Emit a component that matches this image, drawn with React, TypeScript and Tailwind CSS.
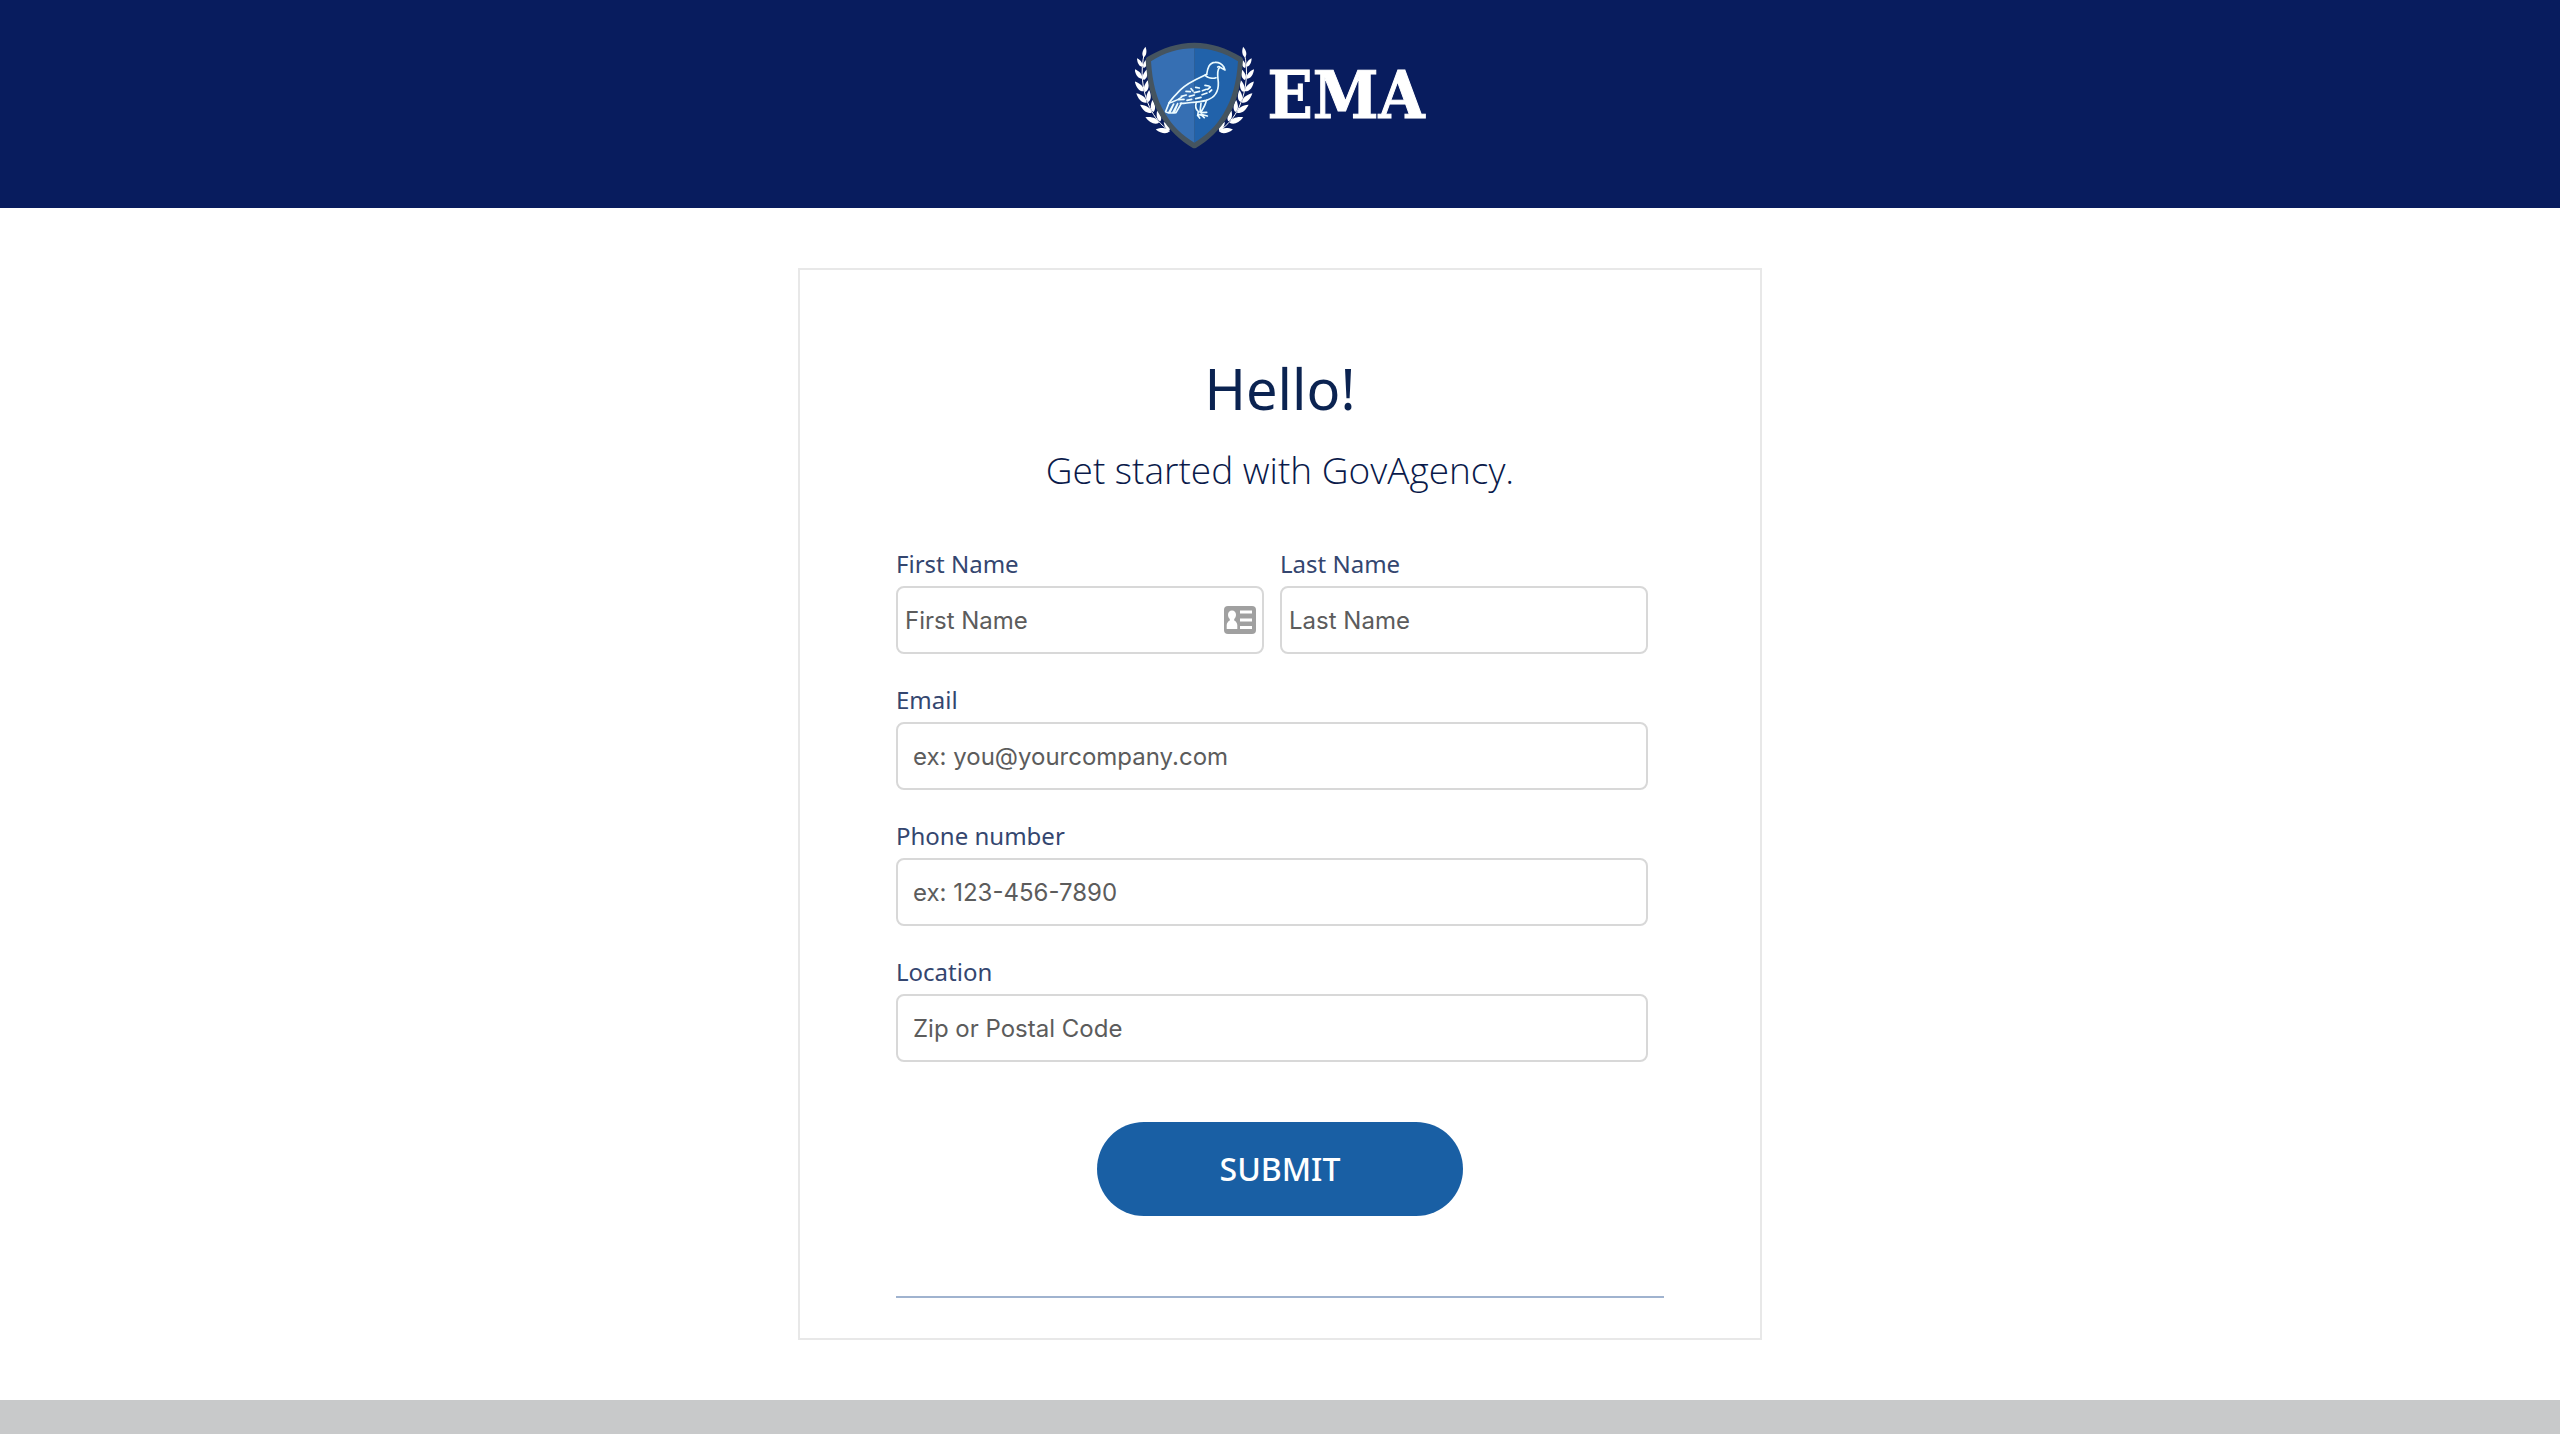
import { useState } from "react";

// [baseX, baseY, rotation, length] of each leaf on the left branch
const leaves = [
  [74, 82, 10, 32],
  [70, 110, -32, 30],
  [74, 114, 22, 30],
  [69, 146, -38, 36],
  [74, 150, 18, 34],
  [74, 184, -42, 40],
  [79, 186, 12, 36],
  [83, 218, -48, 42],
  [88, 216, 4, 36],
  [98, 248, -56, 42],
  [103, 246, -4, 36],
  [120, 278, -68, 44],
  [124, 274, -16, 34],
  [152, 304, -82, 42],
  [152, 300, -36, 30],
];

const Branch = () => (
  <g fill="#ffffff">
    <path d="M76 70C64 120 68 180 92 232C106 262 126 286 152 303" fill="none" stroke="#ffffff" strokeWidth="3" />
    {leaves.map(([x, y, angle, length]) => (
      <path
        key={`${x}-${y}`}
        transform={`translate(${x} ${y}) rotate(${angle}) scale(${length / 30})`}
        d="M0 0C-8 -6 -7 -18 0 -30C7 -18 7 -6 0 0Z"
      />
    ))}
  </g>
);

const Crest = () => (
  <svg viewBox="48 36 360 324" className="h-[108px] w-[120px]" fill="none" aria-hidden="true">
    <Branch />
    <g transform="translate(452 0) scale(-1 1)">
      <Branch />
    </g>
    <path
      d="M226 38C176 38 130 54 86 80Q80 83 80 90C84 156 98 218 124 258C150 300 186 334 220 353Q226 357 232 353C266 334 302 300 328 258C354 218 368 156 372 90Q372 83 366 80C322 54 276 38 226 38Z"
      fill="#45545f"
    />
    <path d="M226 55C180 55 136 68 96 94C100 156 112 208 138 250C160 288 190 317 226 338Z" fill="#366fb3" />
    <path d="M226 55C272 55 316 68 357 94C353 156 340 208 314 250C292 288 262 317 226 338Z" fill="#2162aa" />

    <g stroke="#ecfbff" strokeWidth="5" strokeLinecap="round" strokeLinejoin="round">
      <path d="M263 133C266 115 270 98 288 97C300 96 308 101 314 110L318 120L303 112C301 109 298 109 296 111" />
      <path d="M301 113C292 124 297 140 298 158C299 184 288 203 262 211C240 217 216 217 194 220L184 220" />
      <path d="M263 133C235 146 205 158 185 179C172 193 158 205 150 219" />
      <path d="M258 136C266 143 280 147 291 143" />
      <path d="M150 219L140 245L149 249L164 222M164 222L152 249L161 249L176 221M176 221L165 249L171 248L187 220" />
      <path d="M151 219C164 214 176 212 188 201" />
      <path d="M187 199L202 195M201 184L214 185M178 209L195 208M204 211L218 208M211 199L226 195M230 206L246 202M216 176L222 183M230 172L241 174M226 188L242 184M250 182L262 178M249 194L264 189M258 166L270 168M266 178L274 171M271 186L278 180" />
      <path d="M232 217C228 229 231 239 238 245L236 256M262 211C260 223 253 235 246 246M246 220L243 246" />
      <path d="M236 256C240 253 247 252 256 263M246 248L263 247M246 253L265 258M236 256L242 264" />
    </g>
  </svg>
);

type FieldProps = {
  id: string;
  label: string;
  placeholder: string;
  type?: string;
  compact?: boolean;
  withCard?: boolean;
};

function Field({ id, label, placeholder, type = "text", compact, withCard }: FieldProps) {
  const [value, setValue] = useState("");

  return (
    <div className="pr-4">
      <label htmlFor={id} className="block pb-1 font-['Noto_Sans',sans-serif] text-2xl/[36px] text-[#34466f]">
        {label}
      </label>
      <div className="relative">
        <input
          id={id}
          type={type}
          value={value}
          placeholder={placeholder}
          onChange={(e) => setValue(e.target.value)}
          className={`block h-[68px] w-full rounded-lg border-2 border-[#d8d8d8] bg-white font-[Inter,sans-serif] text-2xl text-[#222222] outline-none placeholder:text-[#5c5c5c] focus:border-[#195fa4] ${
            compact ? "px-[7px]" : "px-[15px]"
          }`}
        />
        {withCard && <ContactCardIcon />}
      </div>
    </div>
  );
}

const ContactCardIcon = () => (
  <svg viewBox="0 0 32 28" className="absolute top-5 right-2 h-7 w-8" aria-hidden="true">
    <rect width="32" height="28" rx="4" fill="#a0a0a0" />
    <path
      d="M8 4.500C10.400 4.500 12 6.300 12 8.800C12 10.800 11.200 12 10.200 13V14.500C12.300 15.500 13 17 13.300 19V23H2.700V19C3 17 3.800 15.500 5.800 14.500V13C4.800 12 4 10.800 4 8.800C4 6.300 5.600 4.500 8 4.500Z"
      fill="#ffffff"
    />
    <path d="M16 4.500H28V7.500H16ZM16 12.500H28V15.500H16ZM16 20H28V23H16Z" fill="#ffffff" />
  </svg>
);

export default function App() {
  return (
    <div className="flex min-h-screen flex-col bg-white">
      <header className="flex h-52 items-start justify-center gap-3 bg-[#081c5e] pt-[42px]">
        <Crest />
        <span className="font-['DejaVu_Serif_Condensed','DejaVu_Serif',serif] text-[66px]/[106px] font-bold text-white [-webkit-text-stroke:1px_white]">
          EMA
        </span>
      </header>

      <main className="mx-auto my-[60px] w-full max-w-[964px] border-2 border-[#e8e8e8] px-24 pt-20 pb-10">
        <h1 className="text-center font-['Noto_Sans',sans-serif] text-[56px]/[76px] text-[#0b2351]">Hello!</h1>
        <h2 className="pt-2 text-center font-['Open_Sans',sans-serif] text-[37px]/[72px] font-light text-[#0a1a4a]">
          Get started with GovAgency.
        </h2>

        <form className="pt-10" onSubmit={(e) => e.preventDefault()}>
          <div className="flex flex-col gap-7">
            <div className="grid grid-cols-2">
              <Field id="first-name" label="First Name" placeholder="First Name" compact withCard />
              <Field id="last-name" label="Last Name" placeholder="Last Name" compact />
            </div>
            <Field id="email" label="Email" type="email" placeholder="ex: you@yourcompany.com" />
            <Field id="phone" label="Phone number" type="tel" placeholder="ex: 123-456-7890" />
            <Field id="location" label="Location" placeholder="Zip or Postal Code" />
          </div>
          <button
            type="submit"
            className="mx-auto mt-[60px] block h-[94px] w-[366px] cursor-pointer rounded-full bg-[#195fa4] font-['Noto_Sans',sans-serif] text-[32px] font-medium text-white hover:bg-[#144f8a]"
          >
            SUBMIT
          </button>
        </form>
        <hr className="mt-20 border-t-2 border-[#a0b3cf]" />
      </main>

      <footer className="min-h-[34px] grow bg-[#c8c9ca]" />
    </div>
  );
}
